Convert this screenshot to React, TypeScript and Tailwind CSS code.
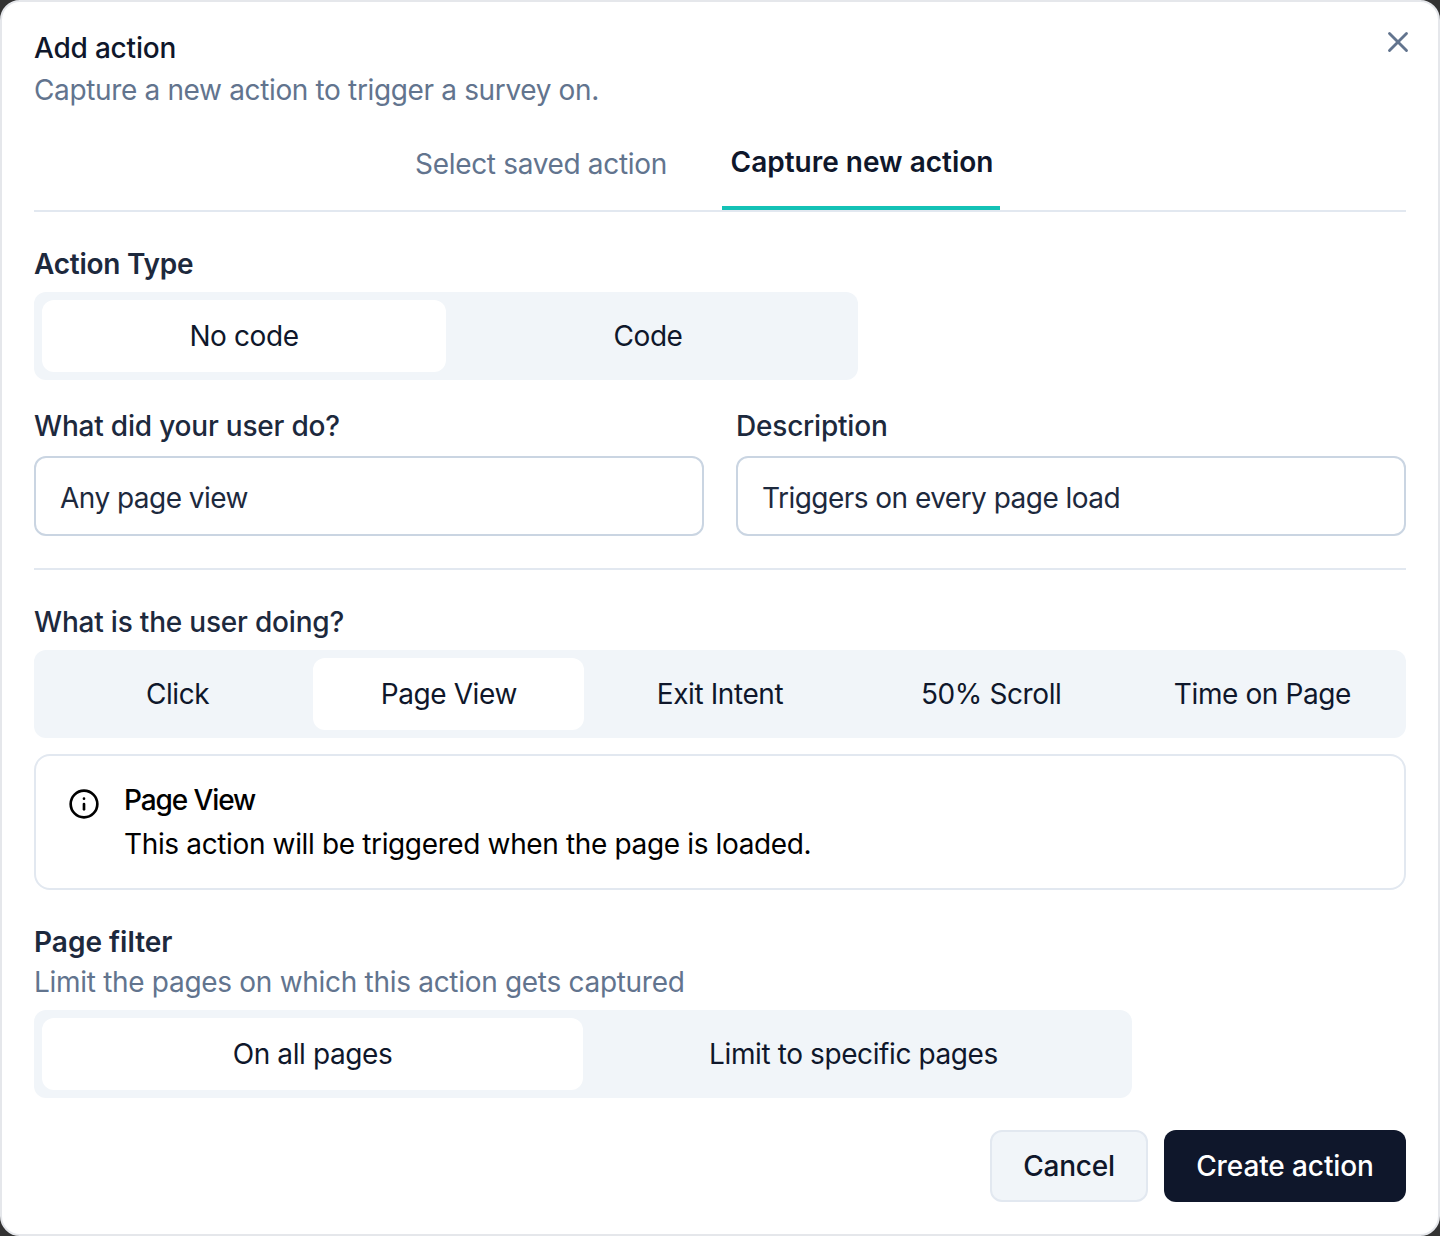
import { X, Info } from 'lucide-react'
import clsx from 'clsx'

// ─── Segmented switch ─────────────────────────────────────────────────────────
function Segments({ items, active, className }: { items: string[]; active: string; className?: string }) {
  return (
    <div className={clsx('flex h-[88px] rounded-[12px] bg-slate-100 p-2', className)}>
      {items.map(item => (
        <div key={item}
          className={clsx(
            'flex flex-1 items-center justify-center rounded-[12px] text-[28px] leading-[40px] tracking-[-0.4px] text-slate-900',
            item === active && 'bg-white',
          )}>
          {item}
        </div>
      ))}
    </div>
  )
}

function Label({ children }: { children: string }) {
  return <div className="text-[28px] font-medium leading-[40px] tracking-[-0.2px] text-slate-800">{children}</div>
}

function Field({ label, value }: { label: string; value: string }) {
  return (
    <div className="flex-1">
      <Label>{label}</Label>
      <div className="mt-[10px] flex h-[80px] items-center rounded-[12px] border-2 border-slate-300 px-6 pt-1 text-[28px] tracking-[-0.53px] text-slate-800">
        {value}
      </div>
    </div>
  )
}

export default function App() {
  return (
    <div className="h-[1236px] w-[1440px] overflow-hidden bg-[#333333] font-['Inter',sans-serif]">
      <div className="relative h-[1236px] rounded-[20px] border-2 border-gray-200 bg-white px-8 pt-[26px]">
        <button className="absolute right-[23px] top-[23px] text-slate-500">
          <X className="h-[34px] w-[34px]" strokeWidth={2} />
        </button>

        <div className="text-[28px] font-medium leading-[40px] tracking-[-0.2px] text-slate-900">Add action</div>
        <div className="mt-[2px] text-[28px] leading-[40px] tracking-[-0.35px] text-slate-500">Capture a new action to trigger a survey on.</div>

        {/* tabs */}
        <div className="mt-[10px] flex h-[92px] gap-[42px] border-b-2 border-slate-200 pl-[368px]">
          <div className="flex h-[90px] w-[278px] items-center justify-center pb-[2px] text-[28px] tracking-[-0.33px] text-slate-500">Select saved action</div>
          <div className="flex h-[90px] w-[278px] items-center justify-center border-b-4 border-[#14c2b6] pb-[2px] pl-[2px] text-[28px] font-semibold text-slate-900">Capture new action</div>
        </div>

        <div className="mt-[32px] text-[28px] font-semibold leading-[40px] tracking-[-0.25px] text-slate-800">Action Type</div>
        <Segments className="mt-2 w-[824px]" items={['No code', 'Code']} active="No code" />

        <div className="mt-[26px] flex gap-8">
          <Field label="What did your user do?" value="Any page view" />
          <Field label="Description" value="Triggers on every page load" />
        </div>

        <div className="mt-[32px] h-[2px] bg-slate-200" />

        <div className="mt-[32px]">
          <Label>What is the user doing?</Label>
        </div>
        <Segments className="mt-2" items={['Click', 'Page View', 'Exit Intent', '50% Scroll', 'Time on Page']} active="Page View" />

        <div className="mt-4 flex h-[136px] gap-[24px] rounded-[16px] border-2 border-slate-200 px-8 pt-[24px] text-black">
          <Info className="mt-[8px] h-[32px] w-[32px] shrink-0" strokeWidth={2} />
          <div>
            <div className="text-[28px] font-medium leading-[40px] tracking-[-1.1px]">Page View</div>
            <div className="mt-[4px] text-[28px] leading-[40px] tracking-[-0.36px]">This action will be triggered when the page is loaded.</div>
          </div>
        </div>

        <div className="mt-[33px] text-[28px] font-semibold leading-[39px] text-slate-800">Page filter</div>
        <div className="text-[28px] leading-[40px] tracking-[-0.3px] text-slate-500">Limit the pages on which this action gets captured</div>
        <Segments className="mt-2 w-[1098px]" items={['On all pages', 'Limit to specific pages']} active="On all pages" />

        <div className="mt-[32px] flex justify-end gap-4">
          <div className="flex h-[72px] w-[158px] items-center justify-center rounded-[12px] border-2 border-slate-200 bg-slate-100 text-[28px] font-medium tracking-[-0.2px] text-slate-900">Cancel</div>
          <div className="flex h-[72px] w-[242px] items-center justify-center rounded-[12px] bg-slate-900 text-[28px] font-medium tracking-[-0.1px] text-white">Create action</div>
        </div>
      </div>
    </div>
  )
}
